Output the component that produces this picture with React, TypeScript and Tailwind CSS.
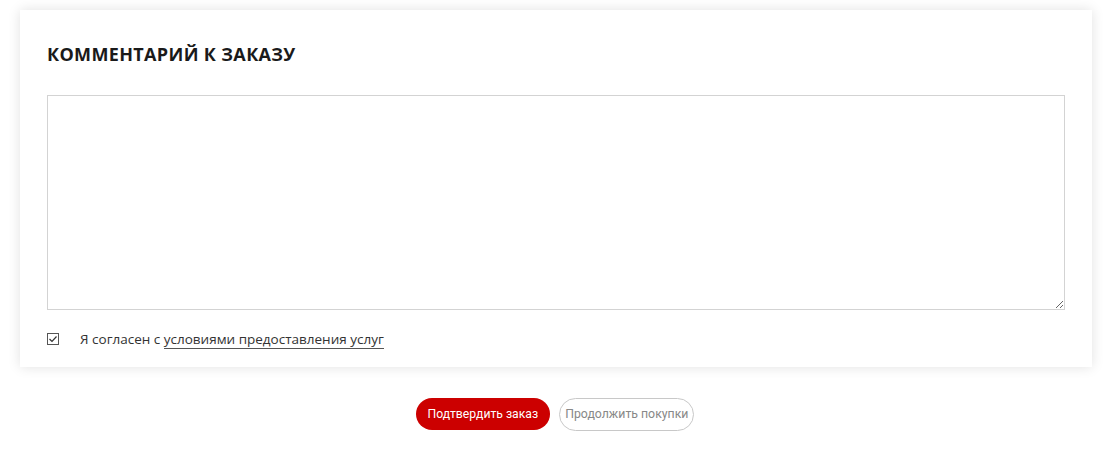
import React from "react";

export default function App() {
  return (
    <div className="w-[1113px] h-[457px] bg-white" style={{ fontFamily: '"Open Sans", "Noto Sans", sans-serif' }}>
      <div className="pt-[10px] pl-[20px] pr-[21px]">
        <div className="bg-white shadow-[0_0_12px_rgba(0,0,0,0.12)] px-[27px] pt-[32px] pb-[18px]">
          <h2
            className="text-[18px] leading-[24px] font-bold text-[#1a1a1a] tracking-[0.35px]"
            style={{ fontFamily: '"Open Sans", "Noto Sans", sans-serif' }}
          >
            КОММЕНТАРИЙ К ЗАКАЗУ
          </h2>
          <textarea
            className="mt-[29px] block w-full h-[215px] border border-[#d3d3d3] outline-none resize-y"
          />
          <div className="mt-[19px] flex items-center">
            <svg width="12" height="12" viewBox="0 0 12 12" className="shrink-0">
              <rect x="0.5" y="0.5" width="11" height="11" fill="white" stroke="#555" />
              <path d="M2.5 6 L5 8.5 L9.5 3.5" fill="none" stroke="#333" strokeWidth="1.2" />
            </svg>
            <span className="ml-[21px] text-[13.5px] text-[#333] leading-[20px]">
              Я согласен с{" "}
              <span className="border-b border-[#555]">условиями предоставления услуг</span>
            </span>
          </div>
        </div>
      </div>
      <div className="mt-[31px] flex justify-center gap-[9px] pr-[3px]">
        <button
          className="h-[32px] px-[12px] rounded-full bg-[#cc0000] text-white text-[12.2px]"
          style={{ fontFamily: 'Roboto, "Noto Sans", sans-serif' }}
        >
          Подтвердить заказ
        </button>
        <button
          className="h-[33px] px-[5px] rounded-full border border-[#c8c8c8] bg-white text-[#888] text-[12.3px]"
          style={{ fontFamily: 'Roboto, "Noto Sans", sans-serif' }}
        >
          Продолжить покупки
        </button>
      </div>
    </div>
  );
}
